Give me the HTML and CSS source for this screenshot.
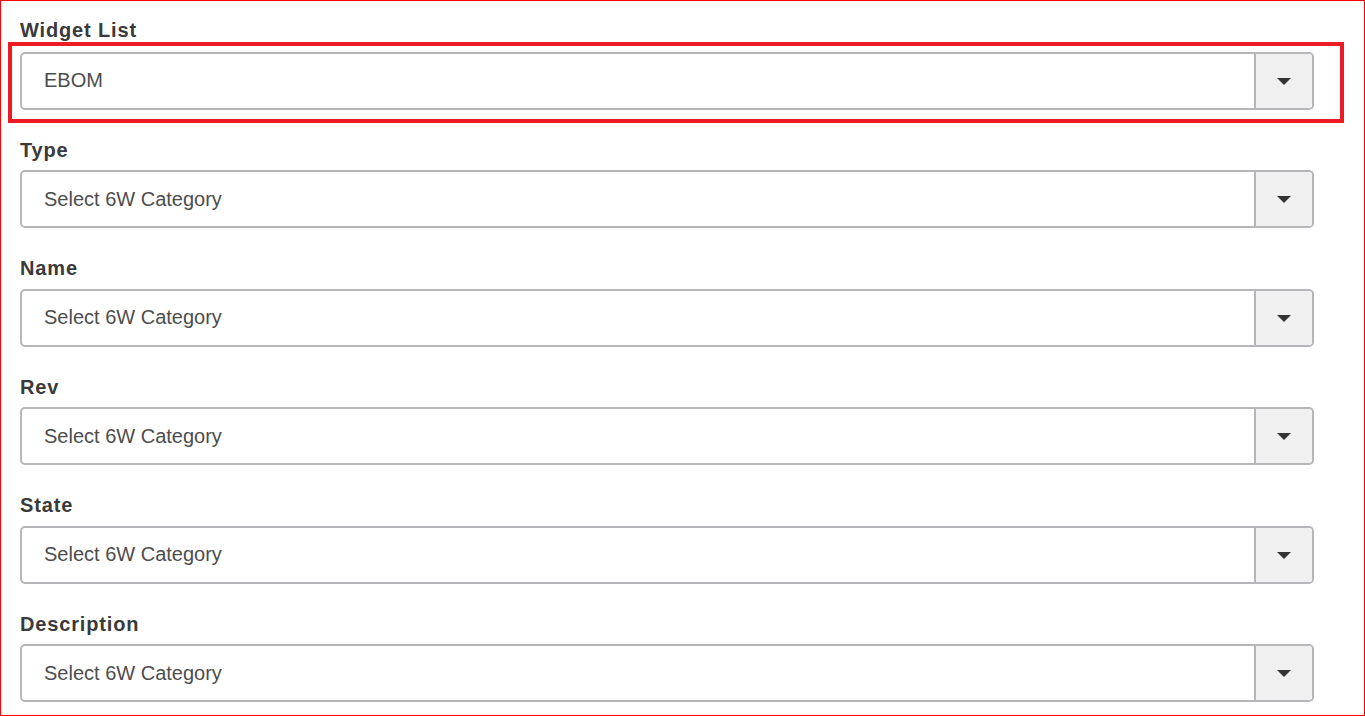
FILE: index.html
```html
<!DOCTYPE html>
<html>
<head>
<meta charset="utf-8">
<link rel="stylesheet" href="styles.css">
</head>
<body>
<div class="frame">
  <div class="group">
    <div class="label">Widget List</div>
    <div class="select"><span class="value">EBOM</span><span class="btn"><span class="caret"></span></span></div>
  </div>
  <div class="group">
    <div class="label">Type</div>
    <div class="select"><span class="value">Select 6W Category</span><span class="btn"><span class="caret"></span></span></div>
  </div>
  <div class="group">
    <div class="label">Name</div>
    <div class="select"><span class="value">Select 6W Category</span><span class="btn"><span class="caret"></span></span></div>
  </div>
  <div class="group">
    <div class="label">Rev</div>
    <div class="select"><span class="value">Select 6W Category</span><span class="btn"><span class="caret"></span></span></div>
  </div>
  <div class="group">
    <div class="label">State</div>
    <div class="select"><span class="value">Select 6W Category</span><span class="btn"><span class="caret"></span></span></div>
  </div>
  <div class="group">
    <div class="label">Description</div>
    <div class="select"><span class="value">Select 6W Category</span><span class="btn"><span class="caret"></span></span></div>
  </div>
  <div class="highlight"></div>
</div>
</body>
</html>
```

FILE: styles.css
```css
html, body {
  margin: 0;
  padding: 0;
  background: #ffffff;
}
.frame {
  position: relative;
  box-sizing: border-box;
  width: 1365px;
  height: 716px;
  border: 1px solid #ff0000;
  padding: 16.5px 50px 0 19px;
  overflow: hidden;
  font-family: "Liberation Sans", Arial, sans-serif;
}
.group {
  display: flex;
  flex-direction: column;
  gap: 8.5px;
  margin-bottom: 28px;
}
.group:first-child {
  gap: 10px;
}
.label {
  font-size: 20px;
  line-height: 24px;
  font-weight: bold;
  color: #3a3a3a;
  letter-spacing: 0.85px;
}
.select {
  box-sizing: border-box;
  height: 58px;
  border: 2px solid #b6b6ba;
  border-radius: 5px;
  display: flex;
  align-items: stretch;
  background: #fff;
  overflow: hidden;
}
.value {
  flex: 1;
  display: flex;
  align-items: center;
  padding-left: 22px;
  font-size: 20px;
  color: #4d4d4d;
}
.btn {
  width: 56px;
  border-left: 2px solid #b6b6ba;
  background: #f0f0f0;
  display: flex;
  align-items: center;
  justify-content: center;
}
.caret {
  width: 0;
  height: 0;
  border-left: 7px solid transparent;
  border-right: 7px solid transparent;
  border-top: 7px solid #333;
  margin-top: 1px;
}
.highlight {
  position: absolute;
  left: 7px;
  top: 41px;
  width: 1336px;
  height: 81px;
  box-sizing: border-box;
  border: 4px solid #ed1c24;
  pointer-events: none;
}
```
